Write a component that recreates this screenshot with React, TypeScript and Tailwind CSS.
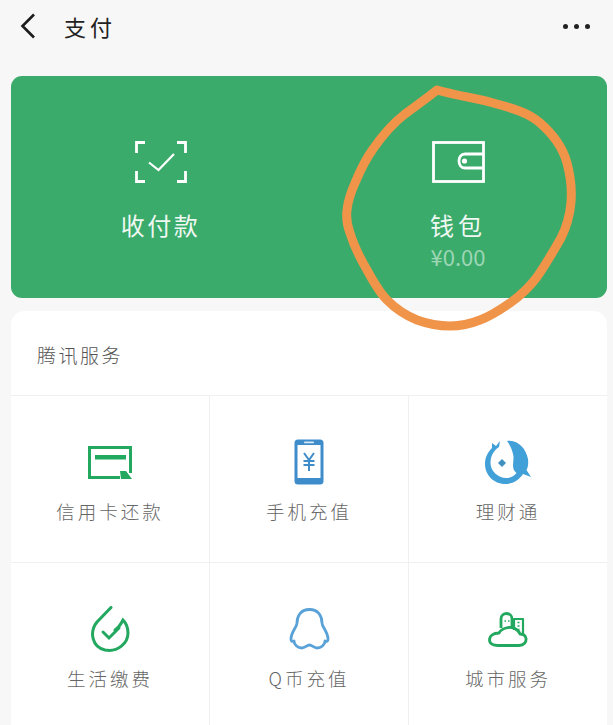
import { ReactNode } from 'react';

const cjk = "font-['Noto_Sans_CJK_SC','Noto_Sans',sans-serif]";

function ScanIcon() {
    return (
        <svg width="52" height="42" viewBox="0 0 52 42" fill="none" stroke="currentColor" strokeWidth="2.8">
            <path d="M1.5 12V1.5H10M42 1.5H50.5V12M1.5 30V40.5H10M42 40.5H50.5V30" />
            <path d="M14 21.5L23.5 29L39 13" strokeWidth="2.2" />
        </svg>
    );
}

function WalletIcon() {
    return (
        <svg width="53" height="42" viewBox="0 0 53 42" fill="none" stroke="currentColor" strokeWidth="2.8">
            <rect x="1.5" y="1.5" width="50" height="39" />
            <path d="M51 13H33C25 13 25 27 33 27H51" />
            <circle cx="32.5" cy="20" r="2.6" fill="currentColor" stroke="none" />
        </svg>
    );
}

function CardIcon() {
    return (
        <svg width="44" height="33" viewBox="0 0 44 33" fill="none">
            <path d="M32 31.5H1.5V1.5H42.5V27" stroke="#22a85f" strokeWidth="3" />
            <rect x="7" y="9" width="31" height="4.5" fill="#22a85f" />
            <path d="M32 25H38L44 33H33Z" fill="#22a85f" />
        </svg>
    );
}

function PhoneIcon() {
    return (
        <svg width="30" height="46" viewBox="0 0 30 46" fill="none">
            <rect x="0.5" y="0.5" width="29" height="45" rx="3.5" fill="#3f8ccb" />
            <rect x="3.5" y="6" width="23" height="33" fill="#fff" />
            <rect x="10" y="2.5" width="10" height="1.8" rx="0.9" fill="#d8e8f5" />
            <path d="M10 14L15 21L20 14M9.5 22H20.5M9.5 26H20.5M15 21V32" stroke="#3f8ccb" strokeWidth="2" />
        </svg>
    );
}

function FishIcon() {
    return (
        <svg width="46" height="44" viewBox="0 0 46 44">
            <path
                d="M22 1C32 -1 41 8 43 19C43.5 24 43 27 41.5 30L46 37L38 34C34 40 28 44 20 44C9 44 0 35 0 24C0 17 3 12 7 8L7 3L11 6L15 1L14 7C8 11 5.5 17 5.5 23C5.5 31 13 38 21 38C26 38 29 36 31.5 33C25 28 30 20 28 14C27 9 25 5 22 1Z"
                fill="#42a0d8"
            />
            <path d="M17 19L21 23L17 27L13 23Z" fill="#3f8fbf" />
        </svg>
    );
}

function DropCheckIcon() {
    return (
        <svg width="40" height="46" viewBox="0 0 40 46" fill="none" stroke="#22a85f" strokeWidth="3" strokeLinecap="round">
            <path d="M21 1.5L7 16C-1 26 2 41 15 44C28 46.5 38 37 38 27C38 22 36 17 33 14C31 18 28 22 25 24" />
            <path d="M13 26L19 32L29 22" />
        </svg>
    );
}

function PenguinIcon() {
    return (
        <svg width="41" height="42" viewBox="0 0 41 42" fill="none" stroke="#59a2d8" strokeWidth="2.8" strokeLinejoin="round">
            <path d="M20.5 1.5C11 1.5 8 9 8 15C8 19 2 24 2 31C2 33 3 34 5 33C5 37 9 40 13 40C16 40 18 37 20.5 37C23 37 25 40 28 40C32 40 36 37 36 33C38 34 39 33 39 31C39 24 33 19 33 15C33 9 30 1.5 20.5 1.5Z" />
        </svg>
    );
}

function CityIcon() {
    return (
        <svg width="40" height="35" viewBox="0 0 40 35" fill="none" stroke="#22a85f" strokeWidth="2.8" strokeLinejoin="round">
            <path d="M10 33.5H31C36 33.5 38.5 30 38 26.5C37.5 23.5 35 22 32 22C30 17 24 14 18 16C14 17 12 19 11 21C5 21 1.5 24 1.5 28C1.5 31.5 5 33.5 10 33.5Z" />
            <path d="M13 16V7C13 3 16 1.5 18.5 1.5C21 1.5 24 3 24 7V17" />
            <path d="M26 18V7H35V23" strokeWidth="2.2" />
            <path d="M16.5 9H18M20 9H21.5M29.5 10.5H31.5M29.5 14H31.5M29.5 17.5H31.5" strokeWidth="1.6" />
        </svg>
    );
}

const services: { label: ReactNode; icon: ReactNode }[] = [
    { label: '信用卡还款', icon: <CardIcon /> },
    { label: '手机充值', icon: <PhoneIcon /> },
    { label: '理财通', icon: <FishIcon /> },
    { label: '生活缴费', icon: <DropCheckIcon /> },
    { label: 'Q币充值', icon: <PenguinIcon /> },
    { label: '城市服务', icon: <CityIcon /> },
];

export default function App() {
    return (
        <div className={`relative h-[725px] w-[613px] overflow-hidden bg-[#f7f7f7] ${cjk}`}>
            <header className="flex h-[76px] items-start justify-between pl-[20px] pr-[23px] pt-[11px]">
                <div className="flex items-start gap-[28px]">
                    <svg className="mt-[2px]" width="16" height="26" viewBox="0 0 16 26" fill="none" stroke="#1c1c1c" strokeWidth="2.6">
                        <path d="M14 1.5L2.5 13L14 24.5" />
                    </svg>
                    <span className="text-[22px] leading-[30px] tracking-[4px] text-[#222]">支付</span>
                </div>
                <div className="mt-[13px] flex gap-[6px]">
                    <span className="h-[5px] w-[5px] rounded-full bg-[#222]" />
                    <span className="h-[5px] w-[5px] rounded-full bg-[#222]" />
                    <span className="h-[5px] w-[5px] rounded-full bg-[#222]" />
                </div>
            </header>

            <section className="ml-[11px] mr-[6px] grid h-[222px] grid-cols-2 rounded-[11px] bg-[#3aab6a] text-white">
                <div className="flex flex-col items-center pl-[1px] pt-[65px]">
                    <ScanIcon />
                    <p className="mt-[26px] text-[24px] leading-[32px] tracking-[2.5px] text-[#f0f8f3]">收付款</p>
                </div>
                <div className="flex flex-col items-center pt-[65px]">
                    <WalletIcon />
                    <p className="mt-[26px] text-[24px] leading-[32px] tracking-[4px] text-[#f0f8f3]">钱包</p>
                    <p className="mt-[1px] text-[22px] leading-[28px] text-[#9ed6b6]">¥0.00</p>
                </div>
            </section>

            <section className="ml-[11px] mr-[6px] mt-[13px] rounded-t-[14px] bg-white">
                <div className="flex h-[85px] items-center border-b border-[#f0f0f0] pl-[26px] pt-[4px]">
                    <h2 className="text-[19px] font-light tracking-[2.5px] text-[#555]">腾讯服务</h2>
                </div>
                <div className="grid grid-cols-[199px_199px_198px]">
                    {services.map((item, index) => (
                        <div
                            key={index}
                            className={`flex h-[167px] flex-col items-center border-[#f0f0f0] pt-[41px] ${index % 3 !== 2 ? 'border-r' : ''} ${index < 3 ? 'border-b' : ''}`}
                        >
                            <div className="flex h-[50px] items-center">{item.icon}</div>
                            <p className="mt-[10px] text-[18.5px] font-light leading-[28px] tracking-[3px] text-[#666]">{item.label}</p>
                        </div>
                    ))}
                </div>
            </section>

            {/* hand-drawn ring around the wallet */}
            <svg className="pointer-events-none absolute left-0 top-0" width="613" height="725" fill="none">
                <path
                    d="M437 90C457 96 478 98 497 104C515 109 528 113 539 122C553 134 563 148 567 163C571 178 572 190 571 202C570 215 567 226 561 238C553 252 546 264 537 277C528 289 520 296 510 303C500 310 491 316 480 320C470 324 460 326 450 326C439 326 428 324 417 320C407 316 396 309 387 300C379 292 373 281 367 270C360 258 354 246 350 233C347 225 346 218 347 210C348 200 351 192 355 183C360 171 365 160 373 149C382 136 392 124 405 114C416 106 427 98 437 90Z"
                    stroke="#f0944a"
                    strokeWidth="9"
                    strokeLinejoin="round"
                />
            </svg>
        </div>
    );
}
